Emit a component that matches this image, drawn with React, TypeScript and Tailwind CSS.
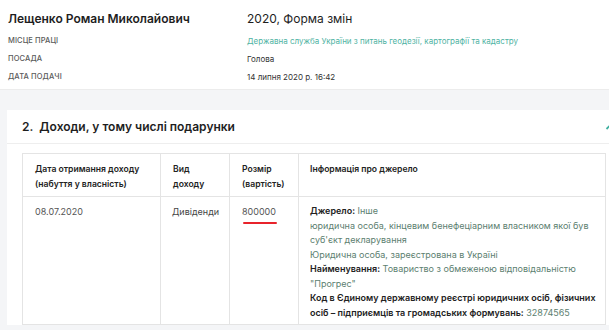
import React from "react";

export default function App() {
  const label = "text-[7.5px] font-medium uppercase text-[#5a5a5a] tracking-[0.1px]";
  const th = "pt-[8px] text-[8.6px] leading-[15px] font-semibold text-[#222]";
  const val = "text-[#5c8070]";
  return (
    <div className="w-[609px] h-[330px] overflow-hidden bg-[#f4f5f7] font-['Inter',sans-serif]">
      <div className="bg-white border-b border-[#ececec] h-[90px] pl-[8px] pt-[10px]">
        <div className="grid grid-cols-[239px_1fr]">
          <div className="h-[17px] text-[12px] leading-[17px] font-semibold text-[#1e1e1e]">Лещенко Роман Миколайович</div>
          <div className="h-[17px] text-[12px] leading-[17px] text-[#1e1e1e]">2020, Форма змін</div>
          <div className={`mt-[5px] h-[18px] leading-[18px] ${label}`}>Місце праці</div>
          <div className="mt-[5px] h-[18px] leading-[18px] text-[8px] text-[#4fb3a3]">Державна служба України з питань геодезії, картографії та кадастру</div>
          <div className={`h-[18px] leading-[18px] ${label}`}>Посада</div>
          <div className="h-[18px] leading-[18px] text-[8px] text-[#333]">Голова</div>
          <div className={`h-[18px] leading-[18px] ${label}`}>Дата подачі</div>
          <div className="h-[18px] leading-[18px] text-[8px] text-[#333]">14 липня 2020 р. 16:42</div>
        </div>
      </div>
      <div className="pt-[20px] pl-[7px]">
        <div className="w-[640px] bg-white">
          <div className="h-[34px] border-b border-[#eeeeee] flex items-center pl-[15px] relative">
            <span className="text-[12px] font-semibold text-[#1e1e1e]">2.&nbsp;&nbsp;Доходи, у тому числі подарунки</span>
            <svg className="absolute left-[598px] top-[13px]" width="10" height="8" viewBox="0 0 10 8">
              <path d="M1.5 6 L5 2.5 L8.5 6" stroke="#3fb0a0" strokeWidth="1.8" fill="none" />
            </svg>
          </div>
          <div className="pt-[9px] pl-[15px]">
            <div className="w-[584px] border border-[#e4e4e4] grid grid-cols-[138px_69px_69px_1fr]">
              <div className={`${th} px-[12px] h-[43px] border-r border-b border-[#e4e4e4]`}>Дата отримання доходу<br />(набуття у власність)</div>
              <div className={`${th} px-[12px] h-[43px] border-r border-b border-[#e4e4e4]`}>Вид<br />доходу</div>
              <div className={`${th} px-[12px] h-[43px] border-r border-b border-[#e4e4e4]`}>Розмір<br />(вартість)</div>
              <div className={`${th} px-[11px] h-[43px] border-b border-[#e4e4e4]`}>Інформація про джерело</div>

              <div className="h-[127px] px-[12px] pt-[8px] text-[9px] leading-[14.5px] text-[#555] border-r border-[#e4e4e4]">08.07.2020</div>
              <div className="h-[127px] px-[11px] pt-[8px] text-[9px] leading-[14.5px] text-[#444] border-r border-[#e4e4e4]">Дивіденди</div>
              <div className="h-[127px] px-[12px] pt-[8px] text-[9px] leading-[14.5px] text-[#555] border-r border-[#e4e4e4]">
                <div>800000</div>
                <div className="mt-[2px] ml-[1px] w-[34px] h-[2px] bg-[#e8232b] rounded-full"></div>
              </div>
              <div className="h-[127px] pl-[11px] pr-[6px] pt-[7px] text-[9px] leading-[14.5px] text-[#222]">
                <div><span className="font-semibold">Джерело:</span> <span className={val}>Інше</span></div>
                <div className={val}>юридична особа, кінцевим бенефеціарним власником якої був суб'єкт декларування</div>
                <div className={val}>Юридична особа, зареєстрована в Україні</div>
                <div><span className="font-semibold">Найменування:</span> <span className={val}>Товариство з обмеженою відповідальністю "Прогрес"</span></div>
                <div><span className="font-semibold">Код в Єдиному державному реєстрі юридичних осіб, фізичних осіб – підприємців та громадських формувань:</span> <span className={val}>32874565</span></div>
              </div>
            </div>
          </div>
        </div>
      </div>
    </div>
  );
}
